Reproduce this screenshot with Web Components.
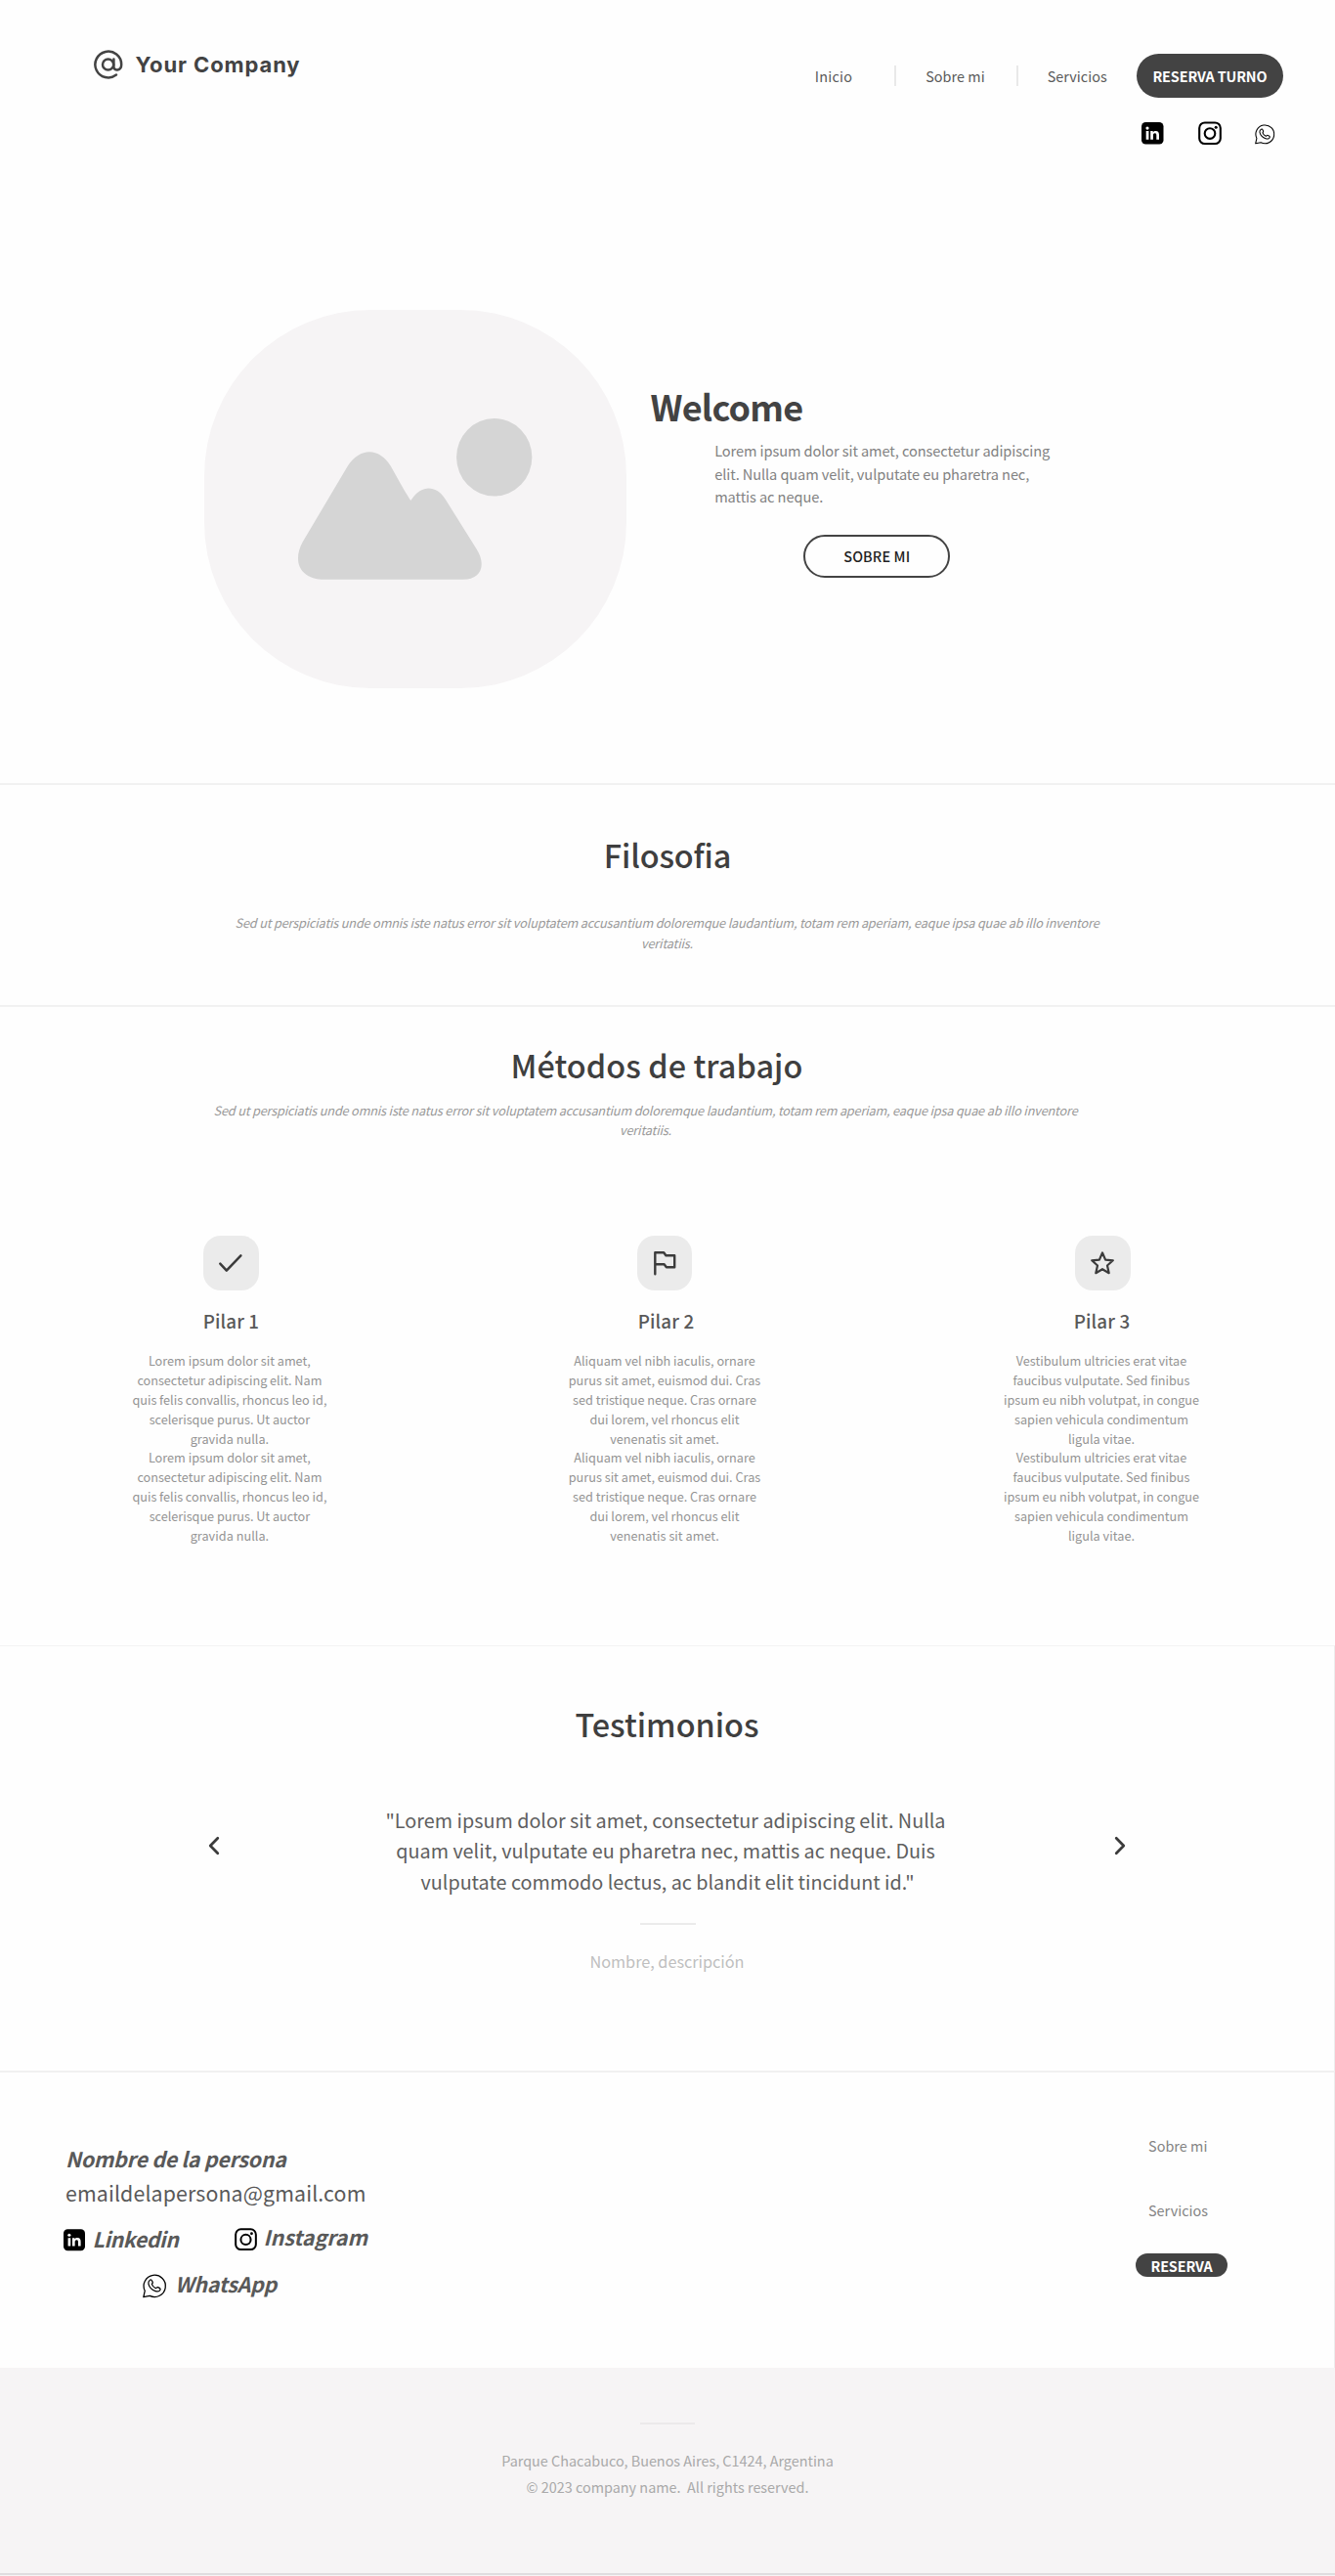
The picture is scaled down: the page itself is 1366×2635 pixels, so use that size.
<!DOCTYPE html>
<html lang="es">
<head>
<meta charset="utf-8">
<title>Your Company</title>
<style>
html,body{margin:0;padding:0}
body{width:1366px;height:2635px;overflow:hidden;background:#fefefe;font-family:"Noto Sans CJK JP","Noto Sans",sans-serif;color:#434343}
</style>
</head>
<body>
<landing-page></landing-page>
<script>
const define=(name,css,html)=>customElements.define(name,class extends HTMLElement{
  connectedCallback(){
    if(this.shadowRoot)return;
    this.attachShadow({mode:'open'}).innerHTML=`<style>*{box-sizing:border-box}:host{display:block;box-sizing:border-box}${css}</style>${typeof html==='function'?html(this):html}`;
  }
});

/* One line of text, tracked so that it fills its measure (w). */
customElements.define('type-line',class extends HTMLElement{
  connectedCallback(){
    if(this.shadowRoot)return;
    const a=n=>this.getAttribute(n);
    this.attachShadow({mode:'open'}).innerHTML=`<style>
      :host{display:block;flex:none;white-space:pre;width:${a('w')}px;height:${a('lh')}px;
        font-size:${a('size')}px;line-height:${a('lh')}px;font-weight:${a('weight')||400};
        font-style:${this.hasAttribute('italic')?'italic':'normal'};color:${a('color')||'inherit'}}
      span{display:inline-block;line-height:inherit;vertical-align:top}
    </style><span><slot></slot></span>`;
    const s=this.shadowRoot.querySelector('span');
    const n=this.textContent.length;
    s.style.letterSpacing=((+a('w')-s.getBoundingClientRect().width)/n)+'px';
  }
});

const icons={
  at:'<svg viewBox="0 0 30 30" fill="none" stroke="#434343" stroke-width="2.5" stroke-linecap="round"><circle cx="14.6" cy="15" r="5.6"/><path d="M20.4 9.6v7.9c0 4.4 7.8 4.2 7.8-2.5A13.4 13.4 0 1 0 23 25.6"/></svg>',
  linkedin:'<svg viewBox="0 0 24 24"><rect width="24" height="24" rx="4.6" fill="#000"/><circle cx="6.4" cy="6.5" r="1.7" fill="#fff"/><path d="M5 9.7h2.9v9.1H5zM9.8 9.7h2.7v1.4c.7-1.1 1.7-1.6 3-1.6 2.7 0 3.7 1.7 3.7 4.4v4.9h-2.9v-4.6c0-1.4-.4-2.2-1.6-2.2-1.3 0-2 .9-2 2.4v4.4H9.8z" fill="#fff"/></svg>',
  instagram:'<svg viewBox="0 0 24 24" fill="none" stroke="#000"><rect x="1.2" y="1.2" width="21.6" height="21.6" rx="5.6" stroke-width="2.1"/><circle cx="12" cy="12.3" r="5.3" stroke-width="2.1"/><circle cx="18.2" cy="5.9" r="1.5" fill="#000" stroke="none"/></svg>',
  whatsapp:'<svg viewBox="0 0 24 24" fill="none" stroke="#000" stroke-width="1.25" stroke-linejoin="round"><path d="M.8 23.2 2.2 17A11 11 0 1 1 7.2 22z"/><path d="M7.2 6.2c1-.8 1.8-.4 2.2.6l.7 1.6c.3.8-.8 1.5-.8 2 .6 1.7 2.3 3.2 3.9 3.9.6.2 1.3-1.4 2.1-1l2.1 1.1c.9.5.3 1.7-.3 2.4-1.1 1.1-2.6 1-4.1.5-3.2-1.1-6.2-4-7.1-7.2-.4-1.5.2-3 1.3-3.9z"/></svg>',
  check:'<svg viewBox="0 0 24 24" fill="none" stroke="#3b3b3b" stroke-width="2.5" stroke-linecap="round" stroke-linejoin="round"><path d="m1.3 12.7 6.5 6.9 14.600-15.300"/></svg>',
  flag:'<svg viewBox="0 0 24 24" fill="none" stroke="#3b3b3b" stroke-width="2.400" stroke-linecap="round" stroke-linejoin="round"><path d="M2.300 23.200V1.200h8.900l2.200 3.100h8.800v12h-8.300l-2.300-3.100H2.300"/></svg>',
  star:'<svg viewBox="0 0 24 24" fill="none" stroke="#3b3b3b" stroke-width="2.200" stroke-linejoin="round"><path d="m12 1.500 3.100 7.100 7.700.7-5.800 5.200 1.700 7.700-6.700-4-6.700 4L7 14.500 1.200 9.300l7.700-.7z"/></svg>',
  prev:'<svg viewBox="0 0 12 20" fill="none" stroke="#3b3b3b" stroke-width="2.700" stroke-linecap="round" stroke-linejoin="round"><path d="M9.800 2.200 2.200 10l7.600 7.800"/></svg>',
  next:'<svg viewBox="0 0 12 20" fill="none" stroke="#3b3b3b" stroke-width="2.700" stroke-linecap="round" stroke-linejoin="round"><path d="M2.200 2.200 9.800 10l-7.600 7.800"/></svg>'
};
define('ui-icon',':host{flex:none}svg{display:block;width:100%;height:100%;overflow:visible}',e=>icons[e.getAttribute('name')]);

define('pill-button',':host{display:flex;flex:none;justify-content:center;align-items:center;border-radius:30px;background:#434343;color:#fff}:host([outline]){background:none;border:2px solid #434343;color:#222}','<slot></slot>');

define('rule-line',':host{flex:none;background:#f1f1f1}','');

define('site-header',`
  :host{display:flex;height:160px}
  .brand{display:flex;padding:50.500px 0 0 96px}
  .brand type-line{font-family:Inter,sans-serif;margin:-2px 0 0 12.500px}
  .brand ui-icon{width:30px;height:30px}
  .right{margin-left:526.200px;padding-top:55px}
  nav{display:flex;align-items:center;height:45px;color:#5a5a5a}
  rule-line{width:2px;height:20.500px;background:#e9e9e9}
  pill-button{width:150.500px;height:44.700px;margin-left:30px;padding-top:1px}
  .social{display:flex;align-items:center;margin:24px 0 0 334px;height:25px}
`,`
  <div class="brand"><ui-icon name="at"></ui-icon><type-line w="169" size="22" lh="34" weight="700" color="#434343">Your Company</type-line></div>
  <div class="right"><nav>
    <type-line w="38.500" size="14.400" lh="24">Inicio</type-line><rule-line style="margin:0 30px 0 43px"></rule-line>
    <type-line w="60.500" size="14.400" lh="24">Sobre mi</type-line><rule-line style="margin:0 30px 0 32px"></rule-line>
    <type-line w="61" size="14.400" lh="24">Servicios</type-line>
    <pill-button><type-line w="117" size="14.400" lh="24" weight="700">RESERVA TURNO</type-line></pill-button>
  </nav><div class="social">
    <ui-icon name="linkedin" style="width:22.500px;height:22.500px"></ui-icon>
    <ui-icon name="instagram" style="width:24px;height:24.500px;margin-left:35.500px"></ui-icon>
    <ui-icon name="whatsapp" style="width:20.500px;height:20.500px;margin:2px 0 0 34px"></ui-icon>
  </div></div>
`);

define('image-placeholder',':host{width:431.500px;height:387.500px;border-radius:170px;background:#f6f4f5;flex:none}svg{display:block;width:100%;height:100%}',
`<svg viewBox="57 80 1295 1162" preserveAspectRatio="none" fill="#d5d5d5"><ellipse cx="947.500" cy="532" rx="116" ry="119"/><path d="M497 560C535 501 594 501 630 560C650 596 668 630 691 665C723 616 767 616 797 660L892 812C926 864 905 907 852 907H428C350 907 327 851 359 792Z"/></svg>`);

define('hero-section',`
  :host{display:flex;height:641.300px}
  image-placeholder{margin:156.700px 25px 0 209px}
  .copy{padding-top:230.800px}
  .text{margin:10.500px 0 27.400px 65.700px;color:#828282}
  pill-button{width:150px;height:43.700px;margin-left:156px;padding-left:1.500px}
`,`
  <image-placeholder></image-placeholder>
  <div class="copy">
    <type-line w="156" size="36" lh="48" weight="700">Welcome</type-line>
    <div class="text">
      <type-line w="343" size="14.600" lh="23.500">Lorem ipsum dolor sit amet, consectetur adipiscing</type-line>
      <type-line w="322" size="14.600" lh="23.500">elit. Nulla quam velit, vulputate eu pharetra nec,</type-line>
      <type-line w="111" size="14.600" lh="23.500">mattis ac neque.</type-line>
    </div>
    <pill-button outline><type-line w="68" size="14.400" lh="24" weight="500">SOBRE MI</type-line></pill-button>
  </div>
`);

define('section-title',':host{display:flex;justify-content:center;color:#3f3f3f}',e=>`<type-line w="${e.getAttribute('w')}" size="32.400" lh="44" weight="500">${e.getAttribute('label')}</type-line>`);

define('intro-text',':host{display:flex;flex-direction:column;align-items:center;color:#999}',`
  <type-line italic w="884" size="12.700" lh="20.200">Sed ut perspiciatis unde omnis iste natus error sit voluptatem accusantium doloremque laudantium, totam rem aperiam, eaque ipsa quae ab illo inventore</type-line>
  <type-line italic w="53" size="12.700" lh="20.200">veritatiis.</type-line>`);

define('philosophy-section',`
  :host{height:226.700px;padding-top:48.300px;border-bottom:2px solid #f1f1f1}
  intro-text{margin-top:38.800px;width:1365px}
`,`<section-title w="130.500" label="Filosofia"></section-title><intro-text></intro-text>`);

define('pillar-card',`
  :host{display:flex;flex-direction:column;align-items:center;width:200px;flex:none;color:#949494}
  .tile{width:56.500px;height:56.500px;border-radius:18px;background:#ebebeb;display:flex;align-items:center;justify-content:center}
  ui-icon{width:24px;height:24px}
  .title{margin-top:17.600px}
  .para{display:flex;flex-direction:column;align-items:center;margin-top:18px;width:196px}
  .para+.para{margin-top:-1px}
`,e=>{
  const lines=[...e.querySelectorAll('li')].map(l=>`<type-line w="${l.dataset.w}" size="12.700" lh="20">${l.textContent}</type-line>`).join('');
  const x=e.getAttribute('body')||0;
  return `<div class="tile"><ui-icon name="${e.getAttribute('icon')}"></ui-icon></div>
  <type-line class="title" style="margin-left:${e.getAttribute('shift')}px" w="57.500" size="18.800" lh="26" weight="500" color="#595959">${e.getAttribute('label')}</type-line>
  <div class="para" style="margin-left:${x}px">${lines}</div><div class="para" style="margin-left:${x}px">${lines}</div>`;
});

define('methods-section',`
  :host{height:653px;padding-top:36.900px}
  section-title{width:1344px}
  intro-text{margin-top:14.900px;width:1321px}
  .row{display:flex;margin:97.500px 0 0 136.400px}
  pillar-card+pillar-card{margin-left:243.600px}
  pillar-card+pillar-card+pillar-card{margin-left:248.500px}
`,`
  <section-title w="299" label="Métodos de trabajo"></section-title><intro-text></intro-text>
  <div class="row">
    <pillar-card icon="check" label="Pilar 1" shift="0" body="-3"><li data-w="166">Lorem ipsum dolor sit amet,</li><li data-w="189">consectetur adipiscing elit. Nam</li><li data-w="199">quis felis convallis, rhoncus leo id,</li><li data-w="164.500">scelerisque purus. Ut auctor</li><li data-w="80.500">gravida nulla.</li></pillar-card>
    <pillar-card icon="flag" label="Pilar 2" shift="3"><li data-w="185.500">Aliquam vel nibh iaculis, ornare</li><li data-w="196.500">purus sit amet, euismod dui. Cras</li><li data-w="188">sed tristique neque. Cras ornare</li><li data-w="153">dui lorem, vel rhoncus elit</li><li data-w="111.500">venenatis sit amet.</li></pillar-card>
    <pillar-card icon="star" label="Pilar 3" shift="-2" body="-3"><li data-w="174.500">Vestibulum ultricies erat vitae</li><li data-w="181">faucibus vulputate. Sed finibus</li><li data-w="200">ipsum eu nibh volutpat, in congue</li><li data-w="178">sapien vehicula condimentum</li><li data-w="68">ligula vitae.</li></pillar-card>
  </div>
`);

define('testimonial-section',`
  :host{height:435.500px;padding-top:57px;border-top:1px solid #f3f3f3;border-right:1px solid #ededed;color:#5f5f5f}
  .row{display:flex;margin-top:60.600px}
  .quote{display:flex;flex-direction:column;align-items:center;width:573px}
  ui-icon{width:12px;height:20px;margin-top:32.600px}
  rule-line{width:56.500px;height:2px;background:#ebebeb;margin:26.600px 0 25.500px 655px}
  .name{margin-left:603.500px}
`,`
  <section-title w="188" label="Testimonios"></section-title>
  <div class="row"><ui-icon name="prev" style="margin-left:213px;margin-right:169.500px"></ui-icon>
  <div class="quote">
    <type-line w="573" size="19.800" lh="31.500">"Lorem ipsum dolor sit amet, consectetur adipiscing elit. Nulla</type-line>
    <type-line w="551.500" size="19.800" lh="31.500">quam velit, vulputate eu pharetra nec, mattis ac neque. Duis</type-line>
    <type-line w="505" size="19.800" lh="31.500" style="margin-left:4px">vulputate commodo lectus, ac blandit elit tincidunt id."</type-line>
  </div><ui-icon name="next" style="margin-left:172.500px"></ui-icon></div>
  <rule-line></rule-line>
  <type-line class="name" w="158" size="16.300" lh="24" color="#bfbfbf">Nombre, descripción</type-line>
`);

define('contact-section',`
  :host{display:flex;height:303.500px;border-top:2px solid #f1f1f1;border-right:1px solid #ededed;color:#595959}
  .person{width:1162px;flex:none;padding:70.600px 0 0 67px}
  .row{display:flex;height:34px;margin-top:10.800px}
  .links{display:flex;flex-direction:column;align-items:flex-start;padding-top:62.400px;color:#848484}
  .links type-line{margin-left:13px}
  pill-button{width:94px;height:24px;padding-top:2px}
`,`
  <div class="person">
    <type-line italic w="225.500" size="21.300" lh="34" weight="700">Nombre de la persona</type-line>
    <type-line style="margin-top:1px" w="307.500" size="21.300" lh="34">emaildelapersona@gmail.com</type-line>
    <div class="row">
      <ui-icon name="linkedin" style="width:22px;height:22.500px;margin:9.100px 7.500px 0 -2px"></ui-icon><type-line style="margin-top:2.300px" italic w="88" size="21.300" lh="34" weight="700">Linkedin</type-line>
      <ui-icon name="instagram" style="width:23px;height:23.300px;margin:7.800px 7px 0 57px"></ui-icon><type-line italic w="106.500" size="21.300" lh="34" weight="700">Instagram</type-line>
    </div>
    <div class="row" style="margin-top:13.800px">
      <ui-icon name="whatsapp" style="width:24.300px;height:24.500px;margin:7.300px 9px 0 78.700px"></ui-icon><type-line italic w="104" size="21.300" lh="34" weight="700">WhatsApp</type-line>
    </div>
  </div>
  <div class="links">
    <type-line w="60.500" size="14.400" lh="24">Sobre mi</type-line>
    <type-line w="61" size="14.400" lh="24" style="margin-top:41.700px">Servicios</type-line>
    <pill-button style="margin-top:32.400px"><type-line style="margin:0" w="63" size="14.400" lh="24" weight="700">RESERVA</type-line></pill-button>
  </div>
`);

define('site-footer',`
  :host{display:flex;flex-direction:column;align-items:center;height:213px;padding-top:56.500px;background:#f6f4f5;color:#a9a9a9}
  rule-line{width:56.500px;height:2px;background:#ebe9ea;margin-bottom:23.600px}
  .end{width:1366px;height:2px;background:#dfdddf;margin:74.500px 0 0}
`,`
  <rule-line></rule-line>
  <type-line w="339.500" size="14.400" lh="26.700">Parque Chacabuco, Buenos Aires, C1424, Argentina</type-line>
  <type-line w="289" size="14.400" lh="26.700">© 2023 company name.  All rights reserved.</type-line>
  <rule-line class="end"></rule-line>
`);

define('landing-page','rule-line{height:2px}',`
  <site-header></site-header>
  <hero-section></hero-section>
  <rule-line></rule-line>
  <philosophy-section></philosophy-section>
  <methods-section></methods-section>
  <testimonial-section></testimonial-section>
  <contact-section></contact-section>
  <site-footer></site-footer>
`);
</script>
</body>
</html>
